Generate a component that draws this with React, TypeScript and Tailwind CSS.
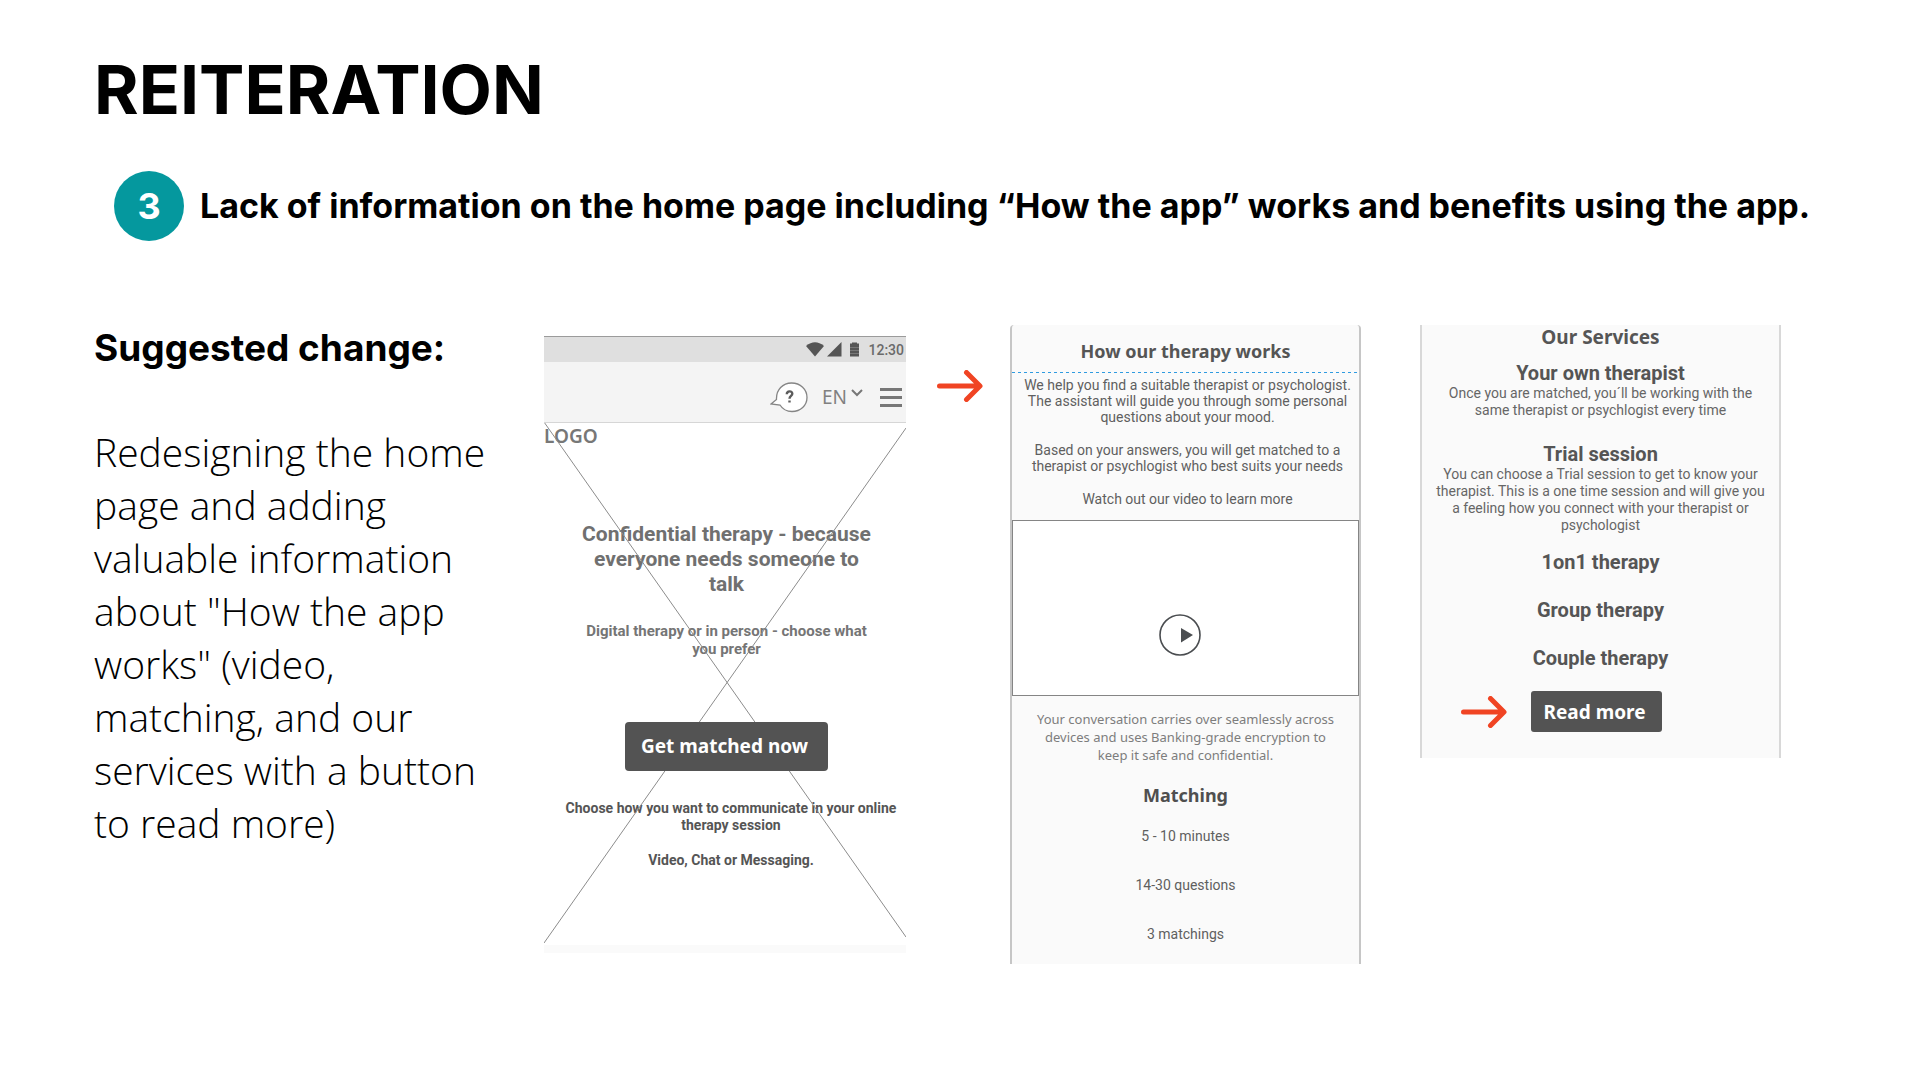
import type { ReactNode } from "react";

const noto = "font-['Noto_Sans',sans-serif]";

function Arrow() {
  return (
    <svg className="h-8 w-[46px] shrink-0" viewBox="0 0 46 32" fill="none" stroke="#f04423" strokeWidth="5" strokeLinecap="round" strokeLinejoin="round" aria-hidden="true">
      <path d="M2.5 16H42M29.5 2.5L43 16L29.5 29.5" />
    </svg>
  );
}

function Lines({ items, className }: { items: string[]; className: string }) {
  return (
    <p className={className}>
      {items.map((line) => (
        <span key={line} className="block whitespace-nowrap">
          {line}
        </span>
      ))}
    </p>
  );
}

function StatusBar() {
  return (
    <div className="flex h-[26px] items-center justify-end border-t border-[#9b9b9b] bg-[#dfdfdf] pr-0.5 text-[#555555]">
      <svg className="h-[15px] w-[18px]" viewBox="0 0 18 15" fill="currentColor" aria-hidden="true">
        <path d="M0 4Q9 -3.5 18 4L9 14.5Z" />
      </svg>
      <svg className="ml-[3px] h-[15px] w-[15px]" viewBox="0 0 15 15" fill="currentColor" aria-hidden="true">
        <path d="M0 14.5L14.5 0V14.5Z" />
      </svg>
      <svg className="ml-[7px] h-[15px] w-[11px]" viewBox="0 0 11 15" aria-hidden="true">
        <path d="M1 1.5H3V0.5H8V1.5H10V14.5H1Z" fill="#555555" />
        <path d="M1 5.5H10M1 8.5H10M1 11.5H10" stroke="#777777" strokeWidth="1" />
      </svg>
      <span className="ml-2 text-[14px] leading-5 font-medium text-[#6a6a6a]">12:30</span>
    </div>
  );
}

function PhoneHeader() {
  return (
    <div className="flex h-[61px] items-center justify-end border-b border-[#d6d6d6] bg-[#f4f4f4] pt-2.5 pr-1">
      <button type="button" aria-label="Help">
        <svg className="h-[31px] w-[38px]" viewBox="0 0 38 31" fill="#ffffff" stroke="#858585" strokeWidth="1.3" aria-hidden="true">
          <path d="M1 22L6.5 17.5C6 7.5 13 1 21.5 1C30.5 1 37 7.5 37 15.5C37 23.5 30.5 29.5 22 29.5C16.5 29.5 12.5 27 10 23Z" />
          <path d="M16.8 12.2C16.8 8.6 22.3 8.4 22.3 11.7C22.3 14 19.5 13.8 19.5 16.8M19.5 18.5V20.5" fill="none" stroke="#5c5c5c" strokeWidth="2.4" />
        </svg>
      </button>
      <button type="button" className={`ml-[14px] flex ${noto} text-[19px] leading-6 text-[#808080]`}>
        EN
        <svg className="mt-1 ml-1 h-2 w-3" viewBox="0 0 12 8" fill="none" stroke="#777777" strokeWidth="2" aria-hidden="true">
          <path d="M1 1L6 6L11 1" />
        </svg>
      </button>
      <button type="button" aria-label="Menu" className="ml-[17px] flex w-[22px] flex-col gap-[5px]">
        <span className="h-[3px] bg-[#777777]" />
        <span className="h-[3px] bg-[#777777]" />
        <span className="h-[3px] bg-[#777777]" />
      </button>
    </div>
  );
}

function HomeScreen() {
  return (
    <section className="mt-[11px] overflow-hidden text-center">
      <StatusBar />
      <PhoneHeader />
      <div className="relative">
        <svg className="pointer-events-none absolute inset-x-0 top-0 h-[520px] w-full" viewBox="0 0 362 520" preserveAspectRatio="none" stroke="#8c8c8c" strokeWidth="1" aria-hidden="true">
          <path d="M0 -1L362 514M362 5L0 520" />
        </svg>
        <div className={`text-left ${noto} text-[19px] leading-[26px] font-semibold text-[#777777]`}>LOGO</div>
        <Lines className="mt-[73px] pl-[3px] text-[21px] leading-[25px] font-bold text-[#707070]" items={["Confidential therapy - because", "everyone needs someone to", "talk"]} />
        <Lines className="mt-[25px] pl-[3px] text-[15px] leading-[18px] font-bold text-[#757575]" items={["Digital therapy or in person - choose what", "you prefer"]} />
        <button type="button" className={`relative mt-[64px] ml-[3px] h-[49px] w-[203px] rounded bg-[#535353] pr-1 ${noto} text-[19px] font-bold text-white`}>
          Get matched now
        </button>
        <Lines className="mt-[29px] pl-3 text-[14px] leading-[17px] font-bold text-[#555555]" items={["Choose how you want to communicate in your online", "therapy session"]} />
        <Lines className="mt-[18px] pl-3 text-[14px] leading-[17px] font-bold text-[#555555]" items={["Video, Chat or Messaging."]} />
        <div className="mt-[76px] h-2 bg-[#fafafa]" />
      </div>
    </section>
  );
}

function TherapyScreen() {
  const body = "text-[14px] leading-4 text-[#5f5f5f]";
  return (
    <section className="rounded-t border-x-2 border-[#c6c6c6] bg-[#fafafa] pb-[22px] text-center">
      <h3 className={`pt-[14px] pb-[9px] ${noto} text-[18px] leading-6 font-bold text-[#555555]`}>How our therapy works</h3>
      <svg className="block h-px w-full" aria-hidden="true">
        <line x1="0" y1="0.5" x2="100%" y2="0.5" stroke="#2f9be0" strokeDasharray="3 3" />
      </svg>
      <div className="mt-1 flex flex-col gap-[17px] pl-1">
        <Lines className={body} items={["We help you find a suitable therapist or psychologist.", "The assistant will guide you through some personal", "questions about your mood."]} />
        <Lines className={body} items={["Based on your answers, you will get matched to a", "therapist or psychlogist who best suits your needs"]} />
        <Lines className={body} items={["Watch out our video to learn more"]} />
      </div>
      <div className="mt-[13px] flex h-[176px] items-center justify-center border border-[#858585] bg-white pt-[54px] pr-[11px]">
        <button type="button" aria-label="Play video">
          <svg className="h-[42px] w-[42px]" viewBox="0 0 42 42" fill="none" aria-hidden="true">
            <circle cx="21" cy="21" r="20" stroke="#4a4d50" strokeWidth="1.6" />
            <path d="M22 14L34 21L22 28.5Z" fill="#4a4d50" />
          </svg>
        </button>
      </div>
      <Lines className={`mt-[14px] ${noto} text-[13px] leading-[18px] text-[#7d7d7d]`} items={["Your conversation carries over seamlessly across", "devices and uses Banking-grade encryption to", "keep it safe and confidential."]} />
      <h3 className={`mt-[19px] ${noto} text-[18px] leading-6 font-bold text-[#4f4f4f]`}>Matching</h3>
      <ul className={`mt-[21px] flex flex-col gap-[33px] ${body}`}>
        <li>5 - 10 minutes</li>
        <li>14-30 questions</li>
        <li>3 matchings</li>
      </ul>
    </section>
  );
}

function Heading({ className, children }: { className: string; children: ReactNode }) {
  return <h4 className={`${className} text-[20px] leading-6 font-bold text-[#555555]`}>{children}</h4>;
}

function ServicesScreen() {
  const body = "text-[14px] leading-[17px] text-[#666666]";
  return (
    <section className="border-x-2 border-[#d8d8d8] bg-[#fafafa] pb-[26px] text-center">
      <h3 className={`${noto} text-[19px] leading-6 font-bold text-[#555555]`}>Our Services</h3>
      <Heading className="mt-3">Your own therapist</Heading>
      <Lines className={body} items={["Once you are matched, you´ll be working with the", "same therapist or psychlogist every time"]} />
      <Heading className="mt-[23px]">Trial session</Heading>
      <Lines className={body} items={["You can choose a Trial session to get to know your", "therapist. This is a one time session and will give you", "a feeling how you connect with your therapist or", "psychologist"]} />
      <Heading className="mt-4">1on1 therapy</Heading>
      <Heading className="mt-6">Group therapy</Heading>
      <Heading className="mt-6">Couple therapy</Heading>
      <div className="mt-[21px] flex items-center gap-6 pl-[39px]">
        <Arrow />
        <button type="button" className={`h-[41px] w-[131px] rounded-[3px] bg-[#535353] pt-0.5 pr-1 ${noto} text-[19px] font-bold text-white`}>
          Read more
        </button>
      </div>
    </section>
  );
}

export default function App() {
  return (
    <main className="min-h-screen bg-white pt-14 pr-[139px] pl-[94px] font-[Roboto,sans-serif] text-black">
      <h1 className="font-[Inter,sans-serif] text-[68px] leading-[66px] font-bold">REITERATION</h1>
      <div className="mt-[49px] -mr-[100px] ml-5 flex items-center gap-4 font-[Inter,sans-serif] font-bold">
        <span className="flex size-[70px] shrink-0 items-center justify-center rounded-full bg-[#05989e] text-[36px] text-white">3</span>
        <h2 className="text-[34px] leading-10 whitespace-nowrap">
          Lack of information on the home page including “How the app” works and benefits using the app.
        </h2>
      </div>
      <div className="mt-[84px] grid grid-cols-[450fr_362fr_104fr_351fr_59fr_361fr] items-start">
        <section>
          <h3 className="font-[Inter,sans-serif] text-[37px] leading-[45px] font-bold">Suggested change:</h3>
          <Lines
            className="mt-[55px] font-['Open_Sans',sans-serif] text-[39px] leading-[53px] font-light"
            items={["Redesigning the home", "page and adding", "valuable information", "about \"How the app", "works\" (video,", "matching, and our", "services with a button", "to read more)"]}
          />
        </section>
        <HomeScreen />
        <div className="flex justify-center pt-[45px] pl-1">
          <Arrow />
        </div>
        <TherapyScreen />
        <div />
        <ServicesScreen />
      </div>
    </main>
  );
}
